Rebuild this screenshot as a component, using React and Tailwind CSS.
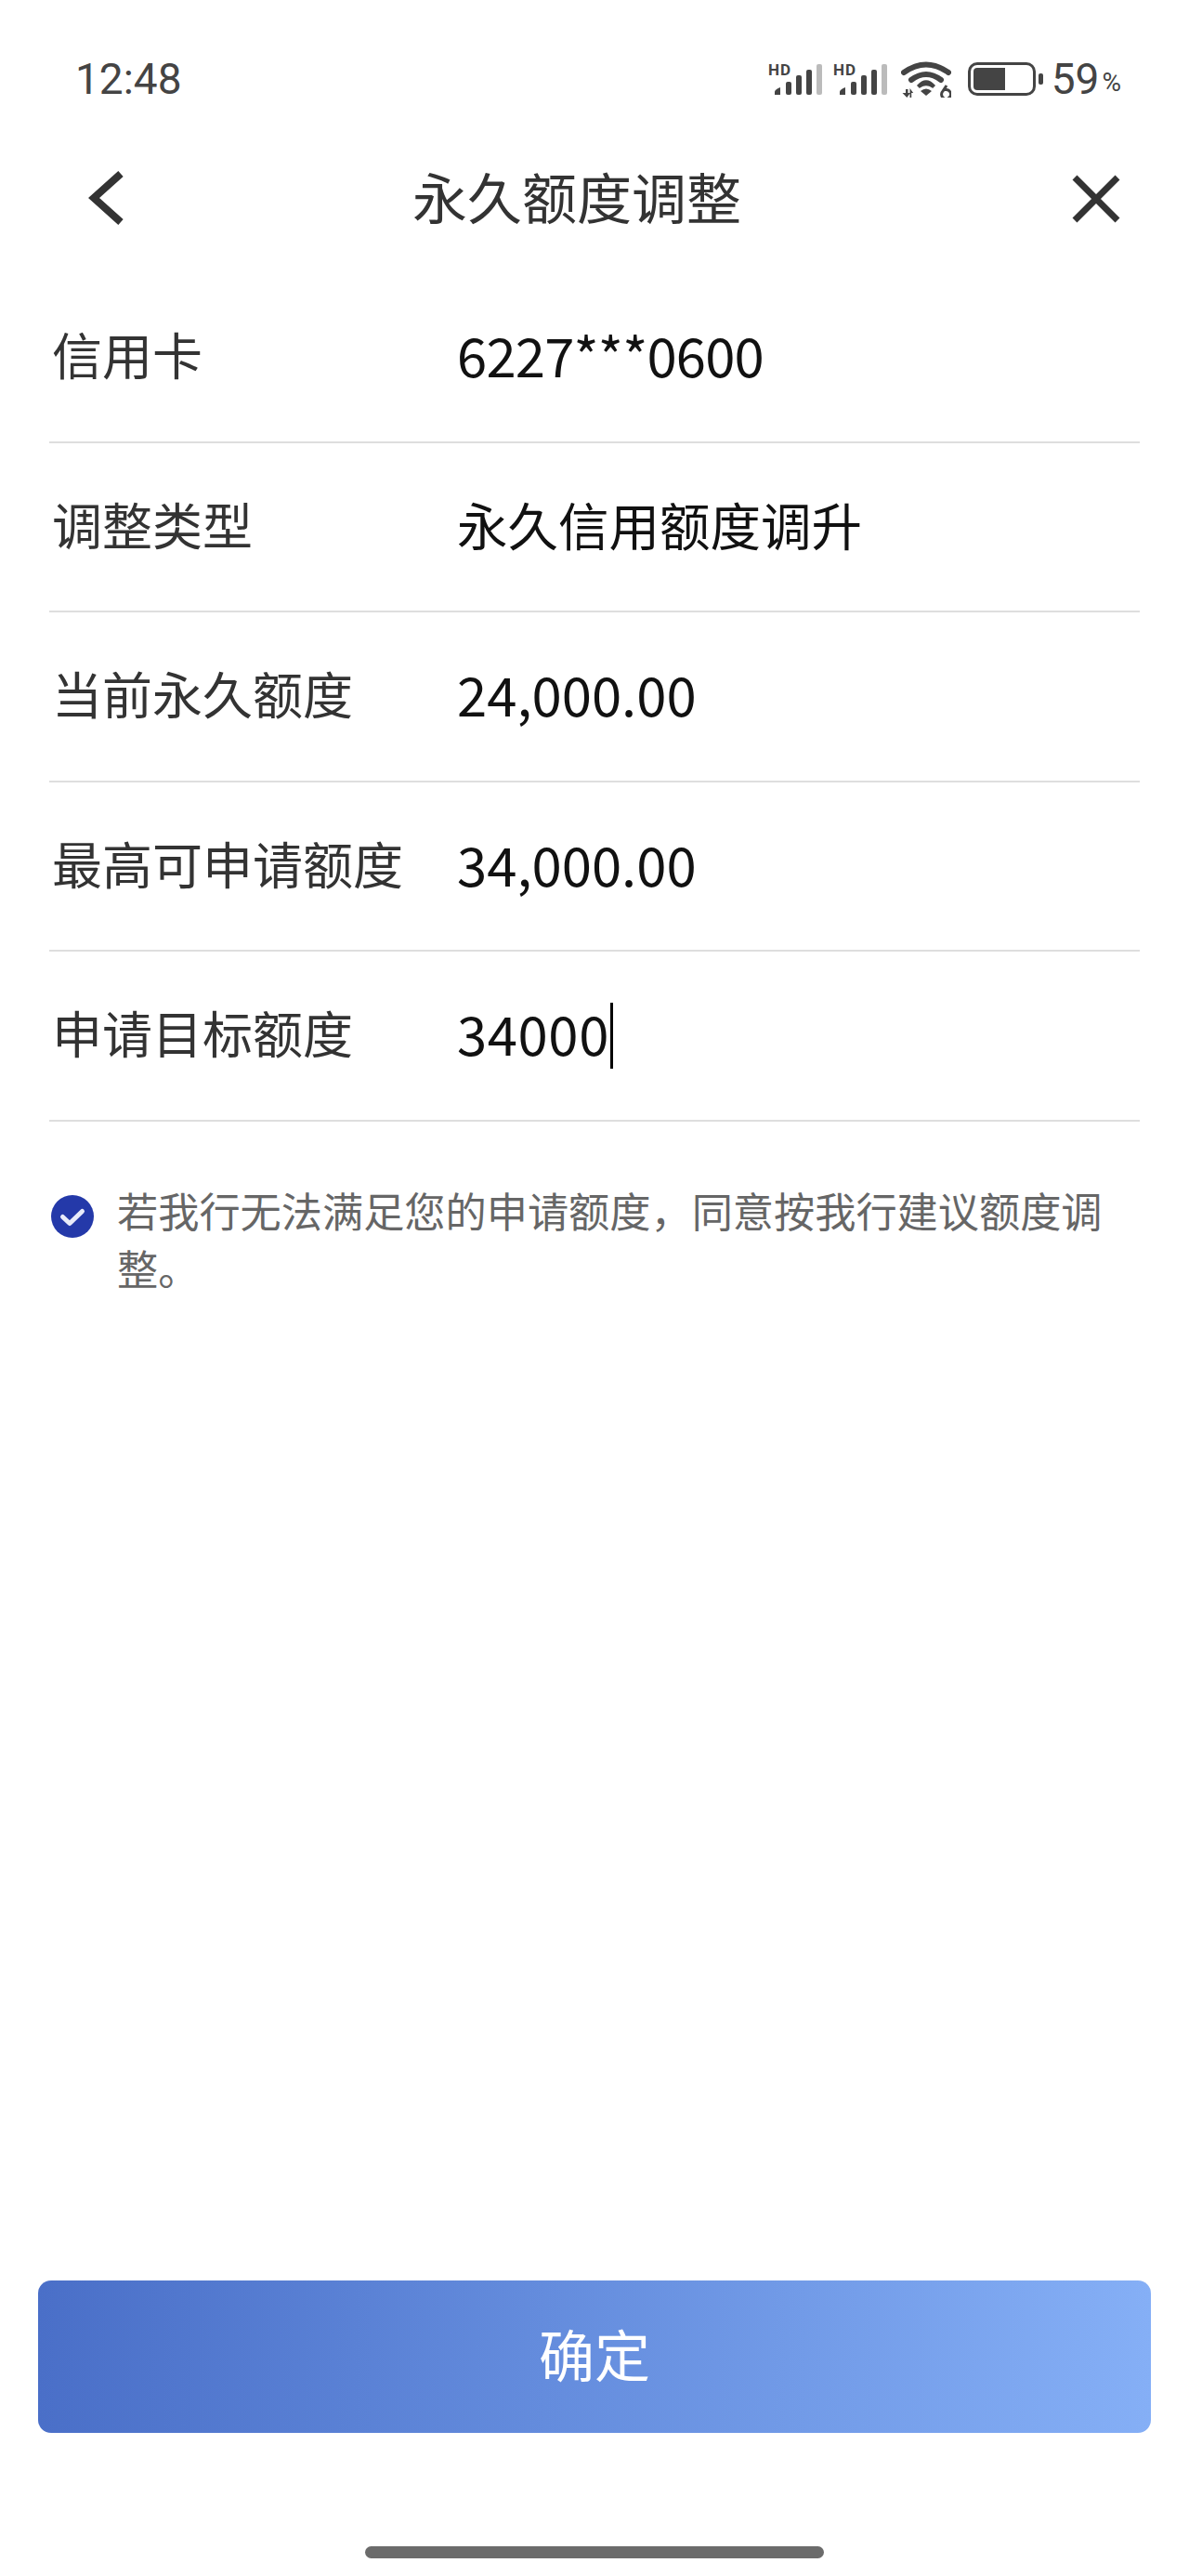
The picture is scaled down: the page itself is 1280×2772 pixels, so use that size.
import React from "react";

const rows = [
    { label: "信用卡", value: "6227***0600", valueClass: "text-[58px] tracking-[-0.8px]" },
    { label: "调整类型", value: "永久信用额度调升", valueClass: "text-[54.500px]" },
    { label: "当前永久额度", value: "24,000.00", valueClass: "text-[58px]" },
    { label: "最高可申请额度", value: "34,000.00", valueClass: "text-[58px]" },
    { label: "申请目标额度", value: "34000", valueClass: "text-[58px] tracking-[0.6px]", caret: true },
];

const Signal = () => (
    <svg width="58" height="34" viewBox="0 0 58 34" className="block overflow-visible">
        <text x="0" y="13" fontSize="17" letterSpacing="1" fontWeight="700" fill="#444" fontFamily="Roboto, sans-serif">HD</text>
        <path d="M7 34v-3c0-2 3-4 6-5v8z" fill="#444" />
        <rect x="19" y="20" width="6" height="14" rx="2" fill="#444" />
        <rect x="30" y="13" width="6" height="21" rx="2" fill="#444" />
        <rect x="41" y="7" width="6" height="27" rx="2" fill="#444" />
        <rect x="52" y="1" width="6" height="33" rx="2" fill="#bbb" />
    </svg>
);

const Wifi = () => (
    <svg width="54" height="40" viewBox="0 0 54 40" className="block ml-[15px]">
        <g fill="none" stroke="#444" strokeWidth="6" strokeLinecap="round">
            <path d="M3 13Q27 -4 51 13" />
            <path d="M11 21Q27 9 43 21" />
        </g>
        <path d="M18 27Q27 17 36 27l-2 2Q27 24 20 29z" fill="#444" stroke="#444" strokeWidth="1.5" />
        <path d="M21 33Q27 28 33 33l-6 5z" fill="#444" />
        <path d="M5 31h2.500v4h2.500l-3.700 5-4.800-5h3.500zM9.500 30l3.700 5h-2v5h-1.700z" fill="#444" />
        <path d="M49 27l-4 6a5 5 0 1 0 4 -1.500h-2" fill="none" stroke="#444" strokeWidth="3" />
    </svg>
);

const Battery = () => (
    <div className="ml-[18px] flex items-center">
        <div className="w-[73px] h-[36px] rounded-[10px] border-[3px] border-[#444] p-[3px] box-border">
            <div className="w-[34px] h-full rounded-l-[4px] bg-[#444]"></div>
        </div>
        <div className="ml-[3px] w-[5px] h-[12px] rounded-[2px] bg-[#444]"></div>
    </div>
);

const Check = () => (
    <svg width="46" height="46" viewBox="0 0 46 46" className="shrink-0 mt-[15px]">
        <circle cx="23" cy="23" r="23" fill="#2439a9" />
        <path d="M12.500 23.500L20 30.500L33.500 17.500" fill="none" stroke="#e8ebfa" strokeWidth="5" strokeLinecap="round" strokeLinejoin="round" />
    </svg>
);

const App = () => {
    return (
        <div className="w-[1280px] h-[2772px] bg-white flex flex-col font-['Noto_Sans_CJK_SC','Noto_Sans',sans-serif]">
            {/* status bar */}
            <div className="h-[170px] shrink-0 flex items-center pl-[81px] pr-[73px] text-[#444]">
                <span className="text-[46px] leading-none font-['Roboto',sans-serif]">12:48</span>
                <div className="ml-auto flex items-center">
                    <Signal />
                    <div className="ml-[12px]"><Signal /></div>
                    <Wifi />
                    <Battery />
                    <span className="ml-[9px] text-[46px] leading-none font-['Roboto',sans-serif]">59</span>
                    <span className="ml-[3px] mt-[8px] text-[28px] leading-none font-['Roboto',sans-serif]">%</span>
                </div>
            </div>

            {/* nav */}
            <div className="h-[86px] shrink-0 flex items-center text-[#333]">
                <div className="w-[444px] shrink-0 pl-[92px]">
                    <svg width="50" height="62" viewBox="0 0 50 62" className="block">
                        <path d="M38 5L9 31l29 26" fill="none" stroke="#333" strokeWidth="8" />
                    </svg>
                </div>
                <div className="text-[59px] leading-none pb-[5px]">永久额度调整</div>
                <div className="flex-1 flex justify-end pr-[74px] pt-[2px]">
                    <svg width="52" height="52" viewBox="0 0 52 52" className="block">
                        <path d="M3 3l46 46M49 3L3 49" fill="none" stroke="#333" strokeWidth="7" />
                    </svg>
                </div>
            </div>

            {/* form rows */}
            <div className="mt-[38px] mx-[53px]">
                {rows.map((row) => (
                    <div key={row.label} className="h-[182.500px] border-b-2 border-[#dedede] flex items-center pb-[6px]">
                        <div className="w-[440px] shrink-0 pl-[3px] text-[54px] leading-none text-[#333]">{row.label}</div>
                        <div className={`flex items-center leading-none text-[#111] -ml-[1px] ${row.valueClass}`}>
                            {row.value}
                            {row.caret && <span className="ml-[1px] mt-[6px] w-[3px] h-[71px] bg-black"></span>}
                        </div>
                    </div>
                ))}
            </div>

            {/* agreement */}
            <div className="mt-[64px] ml-[55px] mr-[38px] flex gap-[25px]">
                <Check />
                <p className="text-[44.200px] leading-[62px] text-[#666]">
                    若我行无法满足您的申请额度，同意按我行建议额度调整。
                </p>
            </div>

            {/* bottom */}
            <div className="mt-auto px-[41px]">
                <button className="w-full h-[164px] pb-[8px] rounded-[14px] bg-gradient-to-r from-[#4a6fc8] to-[#85aff6] text-white text-[60px] leading-none">
                    确定
                </button>
            </div>
            <div className="mt-[122px] mb-[19px] mx-auto w-[494px] h-[13px] rounded-full bg-[#6b6b6b]"></div>
        </div>
    );
};

export default App;
